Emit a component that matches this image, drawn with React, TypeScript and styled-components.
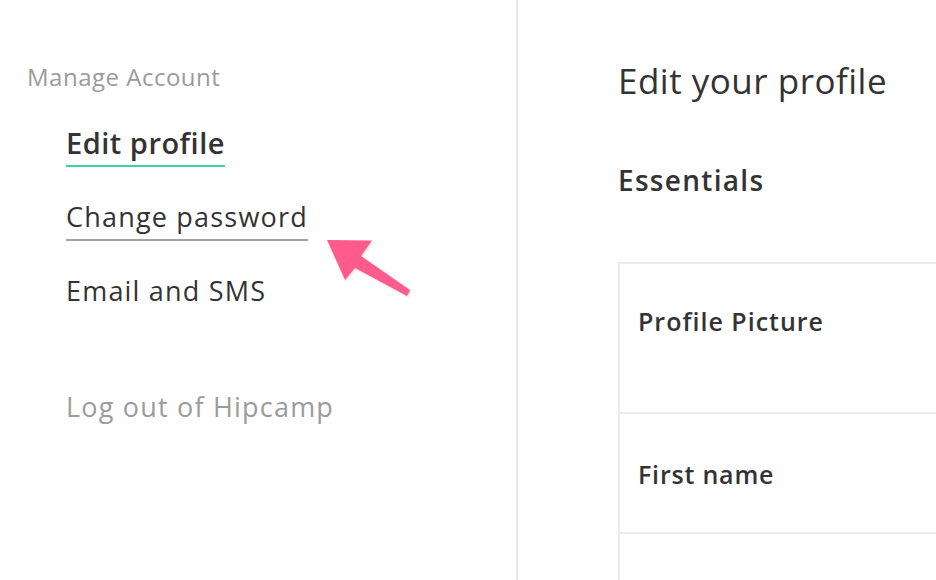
import React from "react";
import styled, { createGlobalStyle } from "styled-components";

const GlobalStyle = createGlobalStyle`
  html, body {
    margin: 0;
    padding: 0;
    background: #fff;
  }
  body {
    font-family: "Open Sans", "Liberation Sans", sans-serif;
    color: #333;
  }
`;

const Page = styled.div`
  position: relative;
  display: flex;
  width: 936px;
  height: 580px;
  overflow: hidden;
`;

const Sidebar = styled.aside`
  flex: 0 0 518px;
  box-sizing: border-box;
  border-right: 2px solid #e9e9e9;
  padding: 62px 0 0 27px;
`;

const SectionLabel = styled.div`
  font-size: 24px;
  line-height: 30px;
  letter-spacing: 0.5px;
  color: #9b9b9b;
  margin-bottom: 33px;
`;

const Nav = styled.nav`
  display: flex;
  flex-direction: column;
  align-items: flex-start;
  gap: 32px;
  padding-left: 39px;
`;

const NavItem = styled.a<{ $active?: boolean; $hover?: boolean }>`
  display: block;
  font-size: ${(p) => (p.$active ? "29px" : "27px")};
  font-weight: ${(p) => (p.$active ? 600 : 400)};
  line-height: 36px;
  letter-spacing: ${(p) => (p.$active ? "0.5px" : "1.2px")};
  color: #333;
  text-decoration: none;
  padding-bottom: 4px;
  border-bottom: 2px solid
    ${(p) => (p.$active ? "#3fd2a7" : p.$hover ? "#a3a3a3" : "transparent")};
`;

const Logout = styled.a`
  display: block;
  margin: 74px 0 0 39px;
  font-size: 27px;
  line-height: 36px;
  letter-spacing: 1.2px;
  color: #9b9b9b;
`;

const Main = styled.main`
  flex: 1;
  padding: 59px 0 0 100px;
`;

const Title = styled.h1`
  margin: 0;
  font-size: 35px;
  font-weight: 400;
  line-height: 44px;
  letter-spacing: 0.5px;
  color: #333;
`;

const SectionTitle = styled.h2`
  margin: 60px 0 0;
  font-size: 28px;
  font-weight: 600;
  line-height: 34px;
  letter-spacing: 1.3px;
  color: #333;
`;

const Table = styled.div`
  margin-top: 65px;
  width: 600px;
  border: 2px solid #ebebeb;
  border-right: none;
`;

const Row = styled.div<{ $height: number; $padTop: number }>`
  height: ${(p) => p.$height}px;
  box-sizing: border-box;
  padding: ${(p) => p.$padTop}px 0 0 18px;
  border-bottom: 2px solid #ebebeb;
  &:last-child {
    border-bottom: none;
  }
`;

const FieldLabel = styled.div<{ $spacing: number }>`
  font-size: 25px;
  font-weight: 600;
  line-height: 30px;
  letter-spacing: ${(p) => p.$spacing}px;
  color: #333;
`;

const Arrow = styled.svg`
  position: absolute;
  left: 320px;
  top: 232px;
  width: 100px;
  height: 70px;
  overflow: visible;
  filter: drop-shadow(1px 1px 1px rgba(0, 0, 0, 0.15));
`;

export default function App() {
  return (
    <Page>
      <GlobalStyle />
      <Sidebar>
        <SectionLabel>Manage Account</SectionLabel>
        <Nav>
          <NavItem $active>Edit profile</NavItem>
          <NavItem $hover>Change password</NavItem>
          <NavItem>Email and SMS</NavItem>
        </Nav>
        <Logout>Log out of Hipcamp</Logout>
      </Sidebar>
      <Main>
        <Title>Edit your profile</Title>
        <SectionTitle>Essentials</SectionTitle>
        <Table>
          <Row $height={150} $padTop={42}>
            <FieldLabel $spacing={1}>Profile Picture</FieldLabel>
          </Row>
          <Row $height={120} $padTop={45}>
            <FieldLabel $spacing={0.8}>First name</FieldLabel>
          </Row>
          <Row $height={120} $padTop={45} />
        </Table>
      </Main>
      <Arrow viewBox="320 232 100 70">
        <polygon
          points="327,240 372,240.5 361,256 410,290 407,296 355,268 345,280"
          fill="#ff5c8d"
        />
      </Arrow>
    </Page>
  );
}
